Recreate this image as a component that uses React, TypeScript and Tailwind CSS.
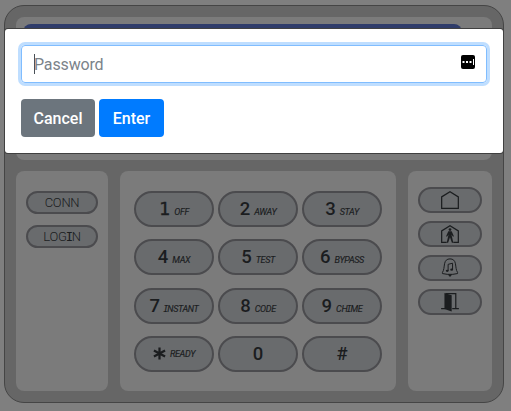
import type { ReactNode } from "react";

type Key = { digit: string; label?: string };

const KEYS: Key[] = [
  { digit: "1", label: "OFF" },
  { digit: "2", label: "AWAY" },
  { digit: "3", label: "STAY" },
  { digit: "4", label: "MAX" },
  { digit: "5", label: "TEST" },
  { digit: "6", label: "BYPASS" },
  { digit: "7", label: "INSTANT" },
  { digit: "8", label: "CODE" },
  { digit: "9", label: "CHIME" },
  { digit: "✱", label: "READY" },
  { digit: "0" },
  { digit: "#" },
];

// Sets every capital I with slab serifs.
function Slab({ text }: { text: string }) {
  return (
    <>
      {text.split(/(I)/).map((part, i) =>
        part === "I" ? (
          <span key={i} className="-mx-[0.09em] font-['DejaVu_Sans_Mono',monospace] text-[0.94em] leading-none">I</span>
        ) : (
          part
        ),
      )}
    </>
  );
}

function Keypad() {
  return (
    <div className="grid w-[248px] grid-cols-[80px_80px_80px] gap-x-1 gap-y-[12.3px]">
      {KEYS.map(({ digit, label }) => (
        <button
          key={digit}
          className="flex h-9 w-20 items-baseline justify-center gap-1 rounded-full border-2 border-[#4b4b4e] bg-[#696b6d] leading-[32px] text-[#1b1d1f]"
        >
          {digit === "1" ? (
            <span className="font-['DejaVu_Sans',sans-serif] text-[17.5px] [-webkit-text-stroke:0.4px_#1b1d1f]">1</span>
          ) : digit === "✱" ? (
            <svg className="h-[13px] w-[13px] self-center" viewBox="0 0 14 13" stroke="#1b1d1f" strokeWidth="2.4">
              <path d="M7 0v13M1 3.2l12 6.6M13 3.2L1 9.8" />
            </svg>
          ) : (
            <span className="text-[18.5px] font-medium">{digit}</span>
          )}
          {label && (
            <span className="text-[9px] tracking-[-0.35px] italic [-webkit-text-stroke:0.15px_#1b1d1f]">
              <Slab text={label} />
            </span>
          )}
        </button>
      ))}
    </div>
  );
}

function SideButton({ children }: { children: ReactNode }) {
  return (
    <button className="flex h-[26px] w-16 items-center justify-center rounded-full border-2 border-[#4b4b4e] bg-[#696b6d]">
      <svg className="shrink-0" width="20" height="20" viewBox="0 0 18 18" fill="none" stroke="#1b1d1f" strokeWidth="1.1">
        {children}
      </svg>
    </button>
  );
}

export default function App() {
  return (
    <div className="relative h-[411px] w-[511px] overflow-hidden bg-[#7f7f7f] pt-[5px] pl-1 font-[Roboto,sans-serif]">
      <div className="flex h-[398px] w-[500px] flex-col gap-3 rounded-[20px] border border-[#454545] bg-[#666] px-[11px] pt-[11px]">
        <div className="h-[143px] w-[476px] shrink-0 rounded-lg bg-[#7b7b7b] px-[7px] pt-[7px]">
          <div className="h-28 w-[439px] rounded-lg bg-[#2f3c6a]" />
        </div>
        <div className="-mt-px flex h-[220px] gap-3">
          <div className="flex w-[92px] shrink-0 flex-col items-center gap-[11px] rounded-lg bg-[#7b7b7b] pt-5 text-[13px] tracking-[-0.25px] text-[#1b1d1f]">
            {["CONN", "LOGIN"].map((label) => (
              <button key={label} className="h-[23px] w-[72px] rounded-full border-2 border-[#4b4b4e] bg-[#696b6d] leading-[20px] font-light">
                <Slab text={label} />
              </button>
            ))}
          </div>
          <div className="w-[276px] shrink-0 rounded-lg bg-[#7b7b7b] pt-5 pl-[14px]">
            <Keypad />
          </div>
          <div className="flex w-[84px] shrink-0 flex-col items-center gap-2 rounded-lg bg-[#7b7b7b] pt-4">
            <SideButton>
              <path d="M1.500 6.200L9 1.500l7.500 4.700v10.300h-15z" />
            </SideButton>
            <SideButton>
              <path d="M6 16.500H1.500V6.200L9 1.500l7.500 4.700v10.300H12" />
              <circle cx="9" cy="5" r="1.200" fill="#1b1d1f" stroke="none" />
              <path d="M7.500 6.600h3l2 4.400-.8.500-1.400-2 1.700 7.300h-1.300L9 12l-1.700 4.800H6l1.700-7.300-1.400 2-.8-.5z" fill="#1b1d1f" stroke="none" />
            </SideButton>
            <SideButton>
              <path d="M2.200 14v-1c1.400-2 1.400-5 1.900-7.800C4.600 2.300 6.200.8 9 .8s4.400 1.500 4.900 4.400c.5 2.800.5 5.800 1.900 7.800v1l-4.300.7h-5zM7.300 11.500V5.700l4-1v5.800" strokeWidth=".9" />
              <ellipse cx="6.500" cy="11.500" rx="1.300" ry="1" fill="#1b1d1f" stroke="none" />
              <ellipse cx="10.500" cy="10.500" rx="1.300" ry="1" fill="#1b1d1f" stroke="none" />
              <path d="M7 14.800h4L9 17z" fill="#1b1d1f" stroke="none" />
            </SideButton>
            <SideButton>
              <path d="M4 1l6.500 2v14.500L4 15.200z" fill="#1b1d1f" stroke="none" />
              <path d="M5 1.500h9.200V15M1 15h4M11 15h6" />
            </SideButton>
          </div>
        </div>
      </div>

      <div role="dialog" className="absolute top-[29px] left-[5px] h-[124px] w-[498px] rounded-[3px] bg-white px-4 pt-4 shadow-[0_0_0_1px_#404040]">
        <div className="flex h-[38px] w-[466px] items-center rounded border border-[#80bdff] pl-3 shadow-[0_0_0_3px_#bfdeff]">
          <span className="h-5 w-px bg-[#495057]" />
          <span className="-ml-px pt-0.5 text-base tracking-[-0.15px] text-[#7b838a]">Password</span>
          <svg className="mr-[11px] mb-1 ml-auto" width="14" height="14" viewBox="0 0 14 14">
            <rect width="14" height="14" rx="2" />
            <path d="M1.500 6h2v2h-2zM5 6h2v2H5zM8.500 6h2v2h-2zM12 4h1v6h-1z" fill="#fff" />
          </svg>
        </div>
        <div className="mt-4 flex gap-1 text-base leading-[38px] font-medium text-white">
          <button className="h-[38px] w-[74px] rounded bg-[#6c757d] pt-px">Cancel</button>
          <button className="h-[38px] w-[65px] rounded bg-[#007bff] pt-px">Enter</button>
        </div>
      </div>
    </div>
  );
}
